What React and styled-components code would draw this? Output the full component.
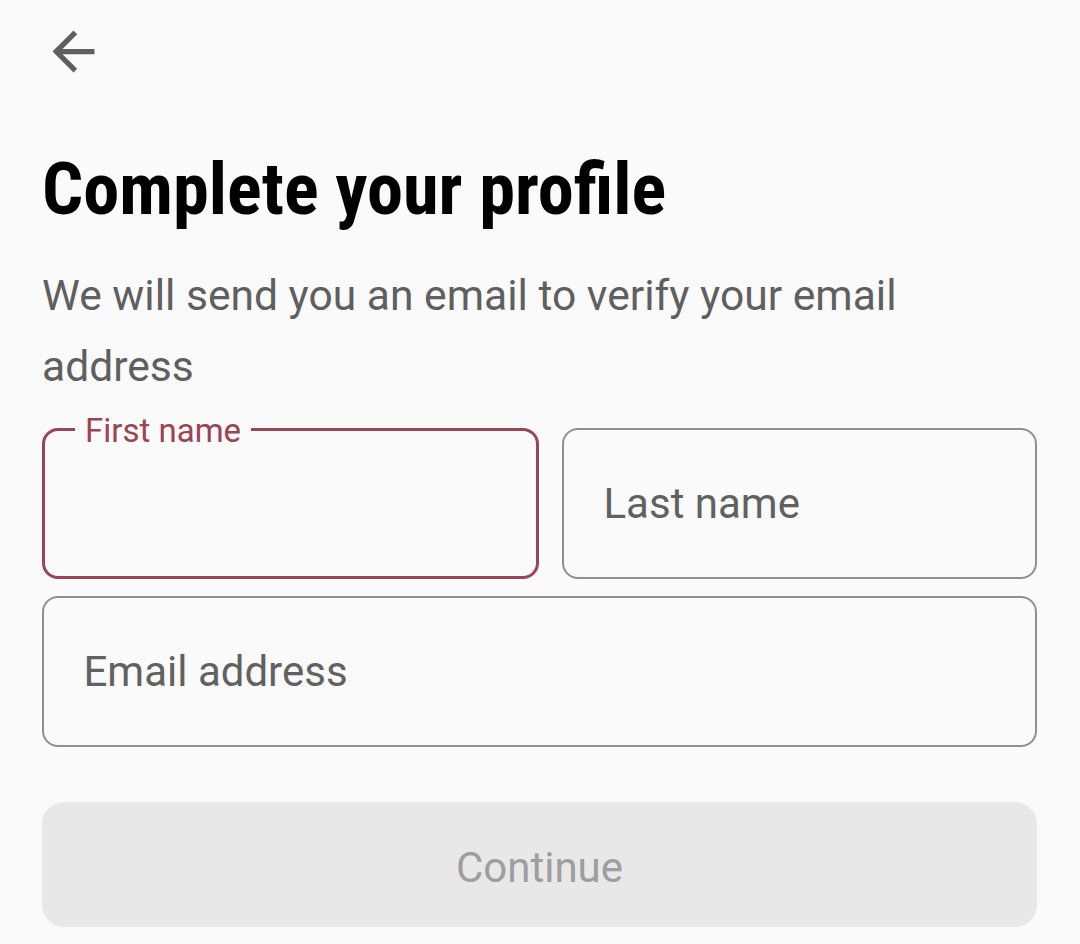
import React from "react";
import styled, { createGlobalStyle } from "styled-components";

const GlobalStyle = createGlobalStyle`
  html, body {
    margin: 0;
    padding: 0;
    background: #fafafa;
  }
  body {
    font-family: Roboto, "Liberation Sans", sans-serif;
  }
`;

const Screen = styled.main`
  width: 1080px;
  height: 944px;
  box-sizing: border-box;
  padding: 20px 43px 0 42px;
  background: #fafafa;
  display: flex;
  flex-direction: column;
  overflow: hidden;
`;

const BackButton = styled.button`
  width: 63px;
  height: 63px;
  padding: 0;
  margin: 0 0 70px 0;
  border: none;
  background: none;
  color: #5f5f5f;
  display: flex;
  align-items: center;
  justify-content: center;
  cursor: pointer;
`;

const Heading = styled.h1`
  margin: 0 0 34px 0;
  font-family: "Roboto Condensed", Roboto, sans-serif;
  font-stretch: condensed;
  font-size: 72.4px;
  line-height: 73px;
  font-weight: 700;
  color: #000;
`;

const Subtitle = styled.p`
  margin: 0 0 26px 0;
  font-size: 42.6px;
  line-height: 71px;
  color: #5f5f5f;
  max-width: 920px;
`;

const Fields = styled.div`
  display: grid;
  grid-template-columns: 497px 1fr;
  column-gap: 23px;
  row-gap: 17px;
`;

const Field = styled.label`
  position: relative;
  box-sizing: border-box;
  height: 151px;
  grid-column: ${(p) => (p.$wide ? "1 / -1" : "auto")};
  border: ${(p) => (p.$focused ? "3px solid #9a4456" : "2.5px solid #8f8f8f")};
  border-radius: 16px;
  display: flex;
  align-items: center;
  padding: 0 ${(p) => (p.$focused ? "39px" : "39.5px")};
`;

const FloatLabel = styled.span`
  position: absolute;
  top: -20px;
  left: 30px;
  padding: 0 10px;
  background: #fafafa;
  color: #9a4456;
  font-size: 33px;
  line-height: 40px;
`;

const Input = styled.input`
  width: 100%;
  border: none;
  outline: none;
  background: transparent;
  padding: 0;
  font-family: Roboto, sans-serif;
  font-size: 42px;
  color: #1c1c1c;
  caret-color: #9a4456;

  &::placeholder {
    color: #616161;
    opacity: 1;
  }
`;

const ContinueButton = styled.button`
  margin-top: 55px;
  height: 125px;
  border: none;
  border-radius: 22px;
  background: #e8e8e8;
  color: #9e9e9e;
  font-family: Roboto, sans-serif;
  font-size: 42px;
  padding-top: 6px;
  cursor: default;
`;

const ArrowBack = () => (
  <svg width="63" height="63" viewBox="0 0 24 24" fill="currentColor">
    <path d="M20 11H7.83l5.59-5.59L12 4l-8 8 8 8 1.41-1.41L7.83 13H20v-2z" />
  </svg>
);

const App = () => (
  <>
    <GlobalStyle />
    <Screen>
      <BackButton aria-label="Back">
        <ArrowBack />
      </BackButton>
      <Heading>Complete your profile</Heading>
      <Subtitle>We will send you an email to verify your email address</Subtitle>
      <Fields>
        <Field $focused>
          <FloatLabel>First name</FloatLabel>
          <Input type="text" />
        </Field>
        <Field>
          <Input type="text" placeholder="Last name" />
        </Field>
        <Field $wide>
          <Input type="email" placeholder="Email address" />
        </Field>
      </Fields>
      <ContinueButton disabled>Continue</ContinueButton>
    </Screen>
  </>
);

export default App;
